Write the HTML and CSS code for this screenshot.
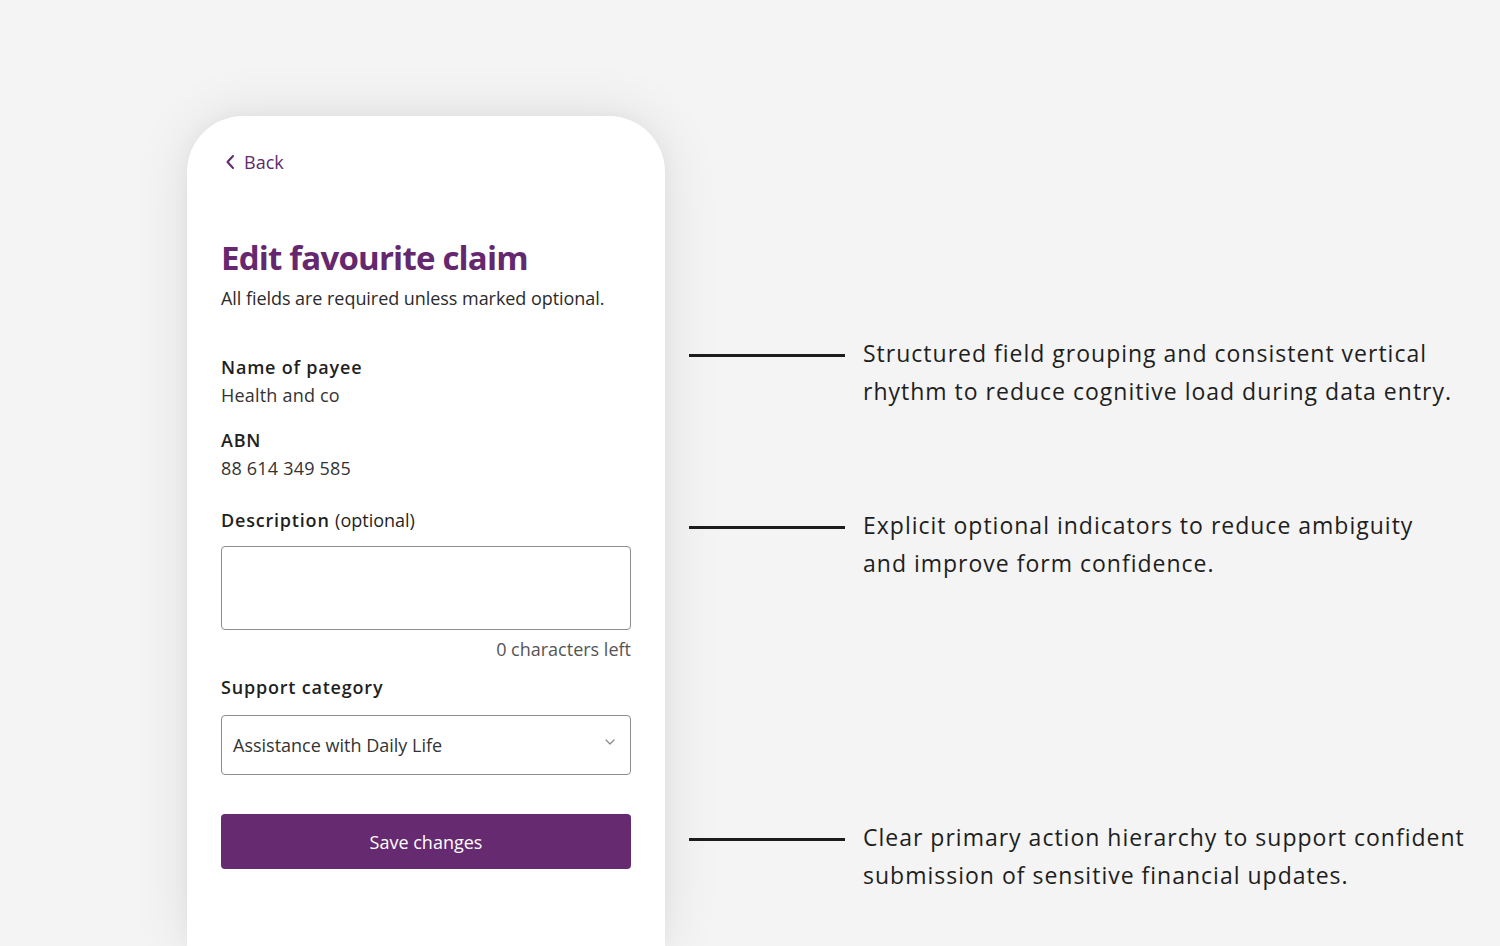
FILE: index.html
```html
<!DOCTYPE html>
<html lang="en">
<head>
<meta charset="utf-8">
<title>Edit favourite claim</title>
<link rel="stylesheet" href="styles.css">
</head>
<body>
<main class="stage">
  <section class="phone">
    <a class="back" href="#">
      <svg class="back-icon" width="10" height="16" viewBox="0 0 10 16" aria-hidden="true"><path d="M8 2 L2.5 8 L8 14" fill="none" stroke="currentColor" stroke-width="2" stroke-linecap="round" stroke-linejoin="round"/></svg>
      <span>Back</span>
    </a>
    <h1 class="title">Edit favourite claim</h1>
    <p class="intro">All fields are required unless marked optional.</p>

    <div class="field field-first">
      <div class="label">Name of payee</div>
      <div class="value">Health and co</div>
    </div>
    <div class="field">
      <div class="label">ABN</div>
      <div class="value">88 614 349 585</div>
    </div>
    <div class="field field-desc">
      <div class="label">Description <span class="optional">(optional)</span></div>
      <div class="textarea"></div>
      <div class="counter">0 characters left</div>
    </div>
    <div class="field field-cat">
      <div class="label">Support category</div>
      <div class="select">
        <span>Assistance with Daily Life</span>
        <svg class="select-icon" width="10" height="6" viewBox="0 0 10 6" aria-hidden="true"><path d="M1 1 L5 5 L9 1" fill="none" stroke="currentColor" stroke-width="1.2" stroke-linecap="round" stroke-linejoin="round"/></svg>
      </div>
    </div>
    <button class="primary" type="button">Save changes</button>
  </section>

  <aside class="notes">
    <div class="note note-1">
      <span class="rule"></span>
      <p>Structured field grouping and consistent vertical<br>rhythm to reduce cognitive load during data entry.</p>
    </div>
    <div class="note note-2">
      <span class="rule"></span>
      <p>Explicit optional indicators to reduce ambiguity<br>and improve form confidence.</p>
    </div>
    <div class="note note-3">
      <span class="rule"></span>
      <p>Clear primary action hierarchy to support confident<br>submission of sensitive financial updates.</p>
    </div>
  </aside>
</main>
</body>
</html>
```

FILE: styles.css
```css
html, body {
  margin: 0;
  padding: 0;
}
body {
  background: #f4f4f4;
  width: 1500px;
  height: 946px;
  overflow: hidden;
  font-family: "Open Sans", "Noto Sans", sans-serif;
  color: #222;
}
.stage {
  display: flex;
  align-items: flex-start;
  padding-left: 187px;
  padding-top: 116px;
}
.phone {
  width: 478px;
  height: 830px;
  box-sizing: border-box;
  background: #fff;
  border-radius: 56px 56px 0 0;
  box-shadow: 0 0 60px rgba(0, 0, 0, 0.09), 0 0 18px rgba(0, 0, 0, 0.04);
  padding: 34px 34px 0 34px;
  display: flex;
  flex-direction: column;
  flex-shrink: 0;
}
.back {
  display: flex;
  align-items: center;
  gap: 9px;
  color: #5e2a6b;
  text-decoration: none;
  font-size: 18px;
  line-height: 24px;
  padding-left: 4px;
}
.back-icon {
  display: block;
}
.title {
  margin: 62px 0 0 0;
  font-size: 33px;
  line-height: 44px;
  font-weight: 700;
  letter-spacing: -0.8px;
  color: #65286f;
}
.intro {
  margin: 6px 0 0 0;
  font-size: 18px;
  line-height: 24px;
  letter-spacing: -0.05px;
  color: #2b2b2b;
}
.field {
  display: flex;
  flex-direction: column;
}
.field-first {
  margin-top: 43px;
}
.field + .field {
  margin-top: 17px;
}
.field.field-desc {
  margin-top: 24px;
}
.field.field-cat {
  margin-top: 10px;
}
.label {
  font-size: 18px;
  line-height: 28px;
  font-weight: 600;
  letter-spacing: 0.8px;
  color: #1f1f1f;
}
.optional {
  font-weight: 400;
  letter-spacing: 0;
}
.value {
  font-size: 18px;
  line-height: 28px;
  letter-spacing: 0.2px;
  color: #333;
}
.textarea {
  margin-top: 12px;
  height: 84px;
  box-sizing: border-box;
  border: 1px solid #8d8d8d;
  border-radius: 4px;
}
.counter {
  margin-top: 5px;
  text-align: right;
  font-size: 18px;
  line-height: 28px;
  color: #555;
}
.select {
  margin-top: 14px;
  height: 60px;
  box-sizing: border-box;
  border: 1px solid #8d8d8d;
  border-radius: 4px;
  display: flex;
  align-items: center;
  justify-content: space-between;
  padding: 0 15px 0 11px;
  font-size: 18px;
  color: #333;
}
.select-icon {
  color: #888;
  margin-top: -6px;
}
.primary {
  margin-top: 39px;
  height: 55px;
  border: none;
  border-radius: 4px;
  background: #662a71;
  color: #fff;
  font-family: "Open Sans", "Noto Sans", sans-serif;
  font-size: 18px;
  cursor: pointer;
}

.notes {
  display: flex;
  flex-direction: column;
  padding-left: 24px;
}
.note {
  display: flex;
  align-items: flex-start;
  gap: 18px;
}
.note-1 {
  margin-top: 218px;
}
.note-2 {
  margin-top: 96px;
}
.note-3 {
  margin-top: 236px;
}
.rule {
  width: 156px;
  height: 3px;
  background: #1c1c1c;
  margin-top: 20px;
  flex-shrink: 0;
}
.note p {
  margin: 0;
  font-family: "Open Sans", "Noto Sans", sans-serif;
  font-size: 23px;
  line-height: 38px;
  letter-spacing: 1px;
  color: #1e1e1e;
  white-space: nowrap;
}
```
